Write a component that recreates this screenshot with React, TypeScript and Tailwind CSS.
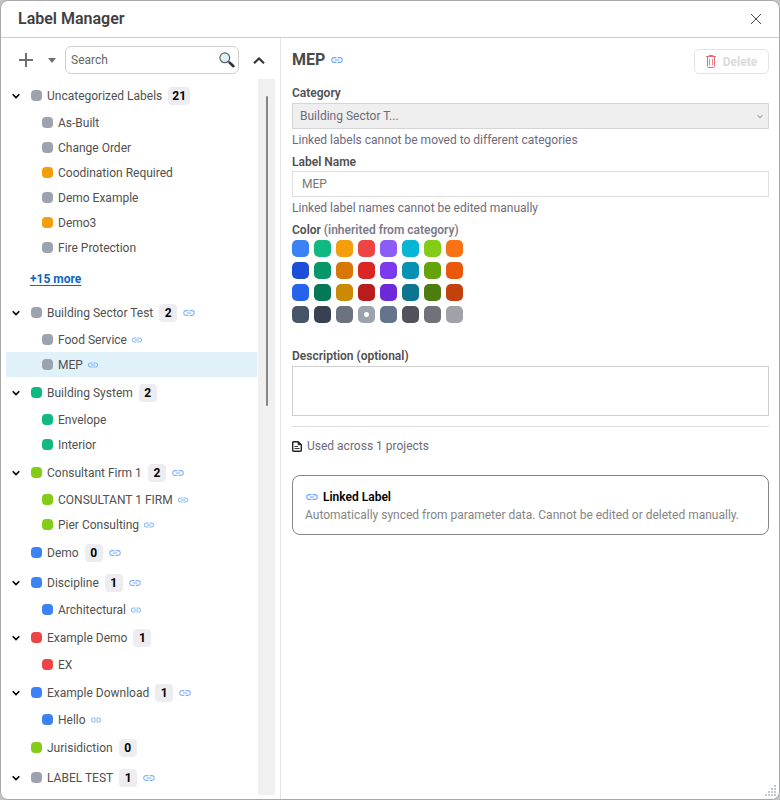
import React from 'react';
import { MdLink } from 'react-icons/md';

interface Label {
  name: string;
  color?: string;
  linked?: boolean;
  selected?: boolean;
}

interface Category {
  name: string;
  color: string;
  count: number;
  linked?: boolean;
  more?: number;
  labels: Label[];
}

const GRAY = 'bg-[#9ca3af]';
const AMBER = 'bg-[#f59e0b]';
const GREEN = 'bg-[#10b981]';
const LIME = 'bg-[#84cc16]';
const BLUE = 'bg-[#3b82f6]';
const RED = 'bg-[#ef4444]';

const categories: Category[] = [
  {
    name: 'Uncategorized Labels',
    color: GRAY,
    count: 21,
    more: 15,
    labels: [
      { name: 'As-Built' },
      { name: 'Change Order' },
      { name: 'Coodination Required', color: AMBER },
      { name: 'Demo Example' },
      { name: 'Demo3', color: AMBER },
      { name: 'Fire Protection' },
    ],
  },
  {
    name: 'Building Sector Test',
    color: GRAY,
    count: 2,
    linked: true,
    labels: [
      { name: 'Food Service', linked: true },
      { name: 'MEP', linked: true, selected: true },
    ],
  },
  {
    name: 'Building System',
    color: GREEN,
    count: 2,
    labels: [{ name: 'Envelope' }, { name: 'Interior' }],
  },
  {
    name: 'Consultant Firm 1',
    color: LIME,
    count: 2,
    linked: true,
    labels: [
      { name: 'CONSULTANT 1 FIRM', linked: true },
      { name: 'Pier Consulting', linked: true },
    ],
  },
  { name: 'Demo', color: BLUE, count: 0, linked: true, labels: [] },
  {
    name: 'Discipline',
    color: BLUE,
    count: 1,
    linked: true,
    labels: [{ name: 'Architectural', linked: true }],
  },
  { name: 'Example Demo', color: RED, count: 1, labels: [{ name: 'EX' }] },
  {
    name: 'Example Download',
    color: BLUE,
    count: 1,
    linked: true,
    labels: [{ name: 'Hello', linked: true }],
  },
  { name: 'Jurisidiction', color: LIME, count: 0, labels: [] },
];

const lastCategory: Category = {
  name: 'LABEL TEST',
  color: GRAY,
  count: 1,
  linked: true,
  labels: [],
};

const swatches = [
  'bg-[#3b82f6]', 'bg-[#10b981]', 'bg-[#f59e0b]', 'bg-[#ef4444]',
  'bg-[#8b5cf6]', 'bg-[#06b6d4]', 'bg-[#84cc16]', 'bg-[#f97316]',
  'bg-[#1d4ed8]', 'bg-[#059669]', 'bg-[#d97706]', 'bg-[#dc2626]',
  'bg-[#7c3aed]', 'bg-[#0891b2]', 'bg-[#65a30d]', 'bg-[#ea580c]',
  'bg-[#2563eb]', 'bg-[#047857]', 'bg-[#ca8a04]', 'bg-[#b91c1c]',
  'bg-[#6d28d9]', 'bg-[#0e7490]', 'bg-[#4d7c0f]', 'bg-[#c2410c]',
  'bg-[#475569]', 'bg-[#374151]', 'bg-[#6b7280]', 'bg-[#9ca3af]',
  'bg-[#64748b]', 'bg-[#52525b]', 'bg-[#71717a]', 'bg-[#a1a1aa]',
];
const SELECTED_SWATCH = 27;

function Chevron({ className }: { className: string }) {
  return (
    <svg className={className} viewBox="0 0 8 6" fill="none" stroke="currentColor">
      <path d="M0.7 1.2 L4 4.5 L7.3 1.2" strokeWidth="1.6" />
    </svg>
  );
}

function CategoryRow({ category, expandable }: { category: Category; expandable: boolean }) {
  return (
    <div className="flex h-[30px] items-center pt-px pl-[11px]">
      <div className="flex w-[19px] shrink-0">
        {expandable && (
          <button type="button" aria-label={`Collapse ${category.name}`} className="text-black">
            <Chevron className="h-[6px] w-2" />
          </button>
        )}
      </div>
      <span className={`size-[11px] shrink-0 rounded-[4px] ${category.color}`} />
      <button type="button" className="ml-[5px] whitespace-nowrap">{category.name}</button>
      <span className="ml-[6px] flex h-[18px] min-w-[18px] items-center justify-center rounded-[4px] bg-[#ededf1] px-1 font-bold text-black">
        {category.count}
      </span>
      {category.linked && <MdLink className="ml-[5px] size-[14px] shrink-0 text-[#7fb2fa]" />}
    </div>
  );
}

function CategoryGroup({ category, expandable }: { category: Category; expandable: boolean }) {
  return (
    <li>
      <CategoryRow category={category} expandable={expandable} />
      <ul>
        {category.labels.map((label) => (
          <li
            key={label.name}
            className={`ml-[5px] flex h-[25px] items-center pl-9 ${label.selected ? 'bg-[#e0f1fa]' : ''}`}
          >
            <span className={`size-[11px] shrink-0 rounded-[4px] ${label.color ?? category.color}`} />
            <button type="button" className="ml-[5px] whitespace-nowrap">{label.name}</button>
            {label.linked && <MdLink className="ml-1 size-3 shrink-0 text-[#7fb2fa]" />}
          </li>
        ))}
      </ul>
      {category.more && (
        <div className="flex h-[37px] items-center pl-[29px]">
          <a href="#more" className="font-bold text-[#0a66c8] underline underline-offset-2">
            +{category.more} more
          </a>
        </div>
      )}
    </li>
  );
}

function Sidebar() {
  return (
    <aside className="flex w-[280px] shrink-0 flex-col border-r border-[#e3e3e6]">
      <div className="flex h-[41px] items-center pt-[3px] pl-[18px]">
        <button type="button" aria-label="Add label" className="text-[#707070]">
          <svg className="size-[14px]" viewBox="0 0 14 14" stroke="currentColor" strokeWidth="2">
            <path d="M7 0 V14 M0 7 H14" />
          </svg>
        </button>
        <button type="button" aria-label="Add options" className="ml-[15px] text-[#707070]">
          <svg className="h-[5px] w-2" viewBox="0 0 8 5" fill="currentColor">
            <path d="M0 0 H8 L4 5 Z" />
          </svg>
        </button>
        <div className="ml-[9px] flex h-7 w-[174px] items-center rounded-[6px] border border-[#cfcfcf] pr-[3px] pl-[5px]">
          <input
            type="text"
            aria-label="Search labels"
            placeholder="Search"
            className="min-w-0 flex-1 outline-none placeholder:text-[#666]"
          />
          <svg className="size-4" viewBox="0 0 16 16" fill="none">
            <path d="M9.3 9.3 L11 11" stroke="#555" strokeWidth="1.5" />
            <path d="M10.8 10.8 L14.4 14.2" stroke="#333" strokeWidth="2.6" strokeLinecap="round" />
            <circle cx="5.8" cy="5.8" r="4.9" fill="#dcf1f5" stroke="#5c6468" strokeWidth="1.2" />
            <path d="M3 5.5 A3 3 0 0 1 5.5 3" stroke="#fff" strokeWidth="1" />
          </svg>
        </div>
        <button type="button" aria-label="Collapse all" className="ml-[14px] text-[#333]">
          <svg className="h-[7px] w-3" viewBox="0 0 12 7" fill="none" stroke="currentColor" strokeWidth="2.2">
            <path d="M1 6.2 L6 1.5 L11 6.2" />
          </svg>
        </button>
      </div>
      <div className="flex flex-1 pb-1">
        <ul className="min-w-0 flex-1 pt-px">
          {categories.map((category) => (
            <CategoryGroup
              key={category.name}
              category={category}
              expandable={category.labels.length > 0}
            />
          ))}
          <CategoryGroup category={lastCategory} expandable />
        </ul>
        {/* Scroll track */}
        <div className="mr-[5px] ml-px flex w-[17px] justify-center bg-[#f0f0f0] pt-[17px]">
          <div className="h-[310px] w-[2px] rounded-full bg-[#858585]" />
        </div>
      </div>
    </aside>
  );
}

function LabelDetails() {
  return (
    <main className="min-w-0 flex-1 pt-[11px] pr-[10px] pl-[11px]">
      <div className="flex h-[25px] items-start justify-between">
        <h2 className="flex items-center text-base leading-[22px] font-bold text-[#4a4a4a]">
          MEP
          <MdLink className="ml-[5px] size-[14px] text-[#69a5fb]" />
        </h2>
        <button
          type="button"
          disabled
          className="flex h-[25px] w-[75px] items-center justify-center gap-[7px] rounded-[5px] border border-[#e4e4e4] font-bold text-[#dadada]"
        >
          <svg className="h-[13px] w-[10px]" viewBox="0 0 10 13" fill="none" stroke="#ea6b78">
            <path d="M0 1.5 H10 M3 1.5 V0.5 H7 V1.5 M1.5 2 V11.5 Q1.5 12.5 2.5 12.5 H7.5 Q8.5 12.5 8.5 11.5 V2" />
            <path d="M3.5 4 V10.5 M6.5 4 V10.5" strokeWidth="0.8" />
          </svg>
          Delete
        </button>
      </div>

      {/* Category */}
      <label htmlFor="category" className="mt-[10px] block font-semibold">Category</label>
      <div className="mt-px grid items-center">
        <select
          id="category"
          disabled
          className="col-start-1 row-start-1 h-[26px] w-full appearance-none border border-[#d5d5d5] bg-[#efefef] px-[7px] text-[#6e6a7c] opacity-100"
        >
          <option>Building Sector T...</option>
        </select>
        <Chevron className="col-start-1 row-start-1 mr-[6px] h-[5px] w-[6px] justify-self-end text-[#a8a8a8]" />
      </div>
      <p className="mt-[2px] text-[#6e6a7c]">Linked labels cannot be moved to different categories</p>

      {/* Name */}
      <label htmlFor="label-name" className="mt-1 block font-semibold">Label Name</label>
      <input
        id="label-name"
        type="text"
        readOnly
        value="MEP"
        className="block h-[26px] w-full border border-[#e0e0e0] px-[9px] text-[#777] outline-none"
      />
      <p className="mt-[2px] text-[#6e6a7c]">Linked label names cannot be edited manually</p>

      {/* Color */}
      <fieldset className="mt-1">
        <legend className="font-semibold">
          Color <span className="text-[#7d7a8a]">(inherited from category)</span>
        </legend>
        <div className="mt-px grid w-fit grid-cols-8 gap-[5px]">
          {swatches.map((color, i) => (
            <input
              key={color}
              type="radio"
              name="color"
              aria-label={`Color ${i + 1}`}
              disabled
              defaultChecked={i === SELECTED_SWATCH}
              className={`size-[17px] appearance-none rounded-[5px] checked:bg-[radial-gradient(circle,white_2px,transparent_3px)] ${color}`}
            />
          ))}
        </div>
      </fieldset>

      {/* Description */}
      <label htmlFor="description" className="mt-6 block font-semibold">Description (optional)</label>
      <textarea
        id="description"
        className="mt-px block h-[50px] w-full resize-none border border-[#cfcfcf] p-2 outline-none"
      />

      <div className="mt-[10px] flex items-center gap-[5px] border-t border-[#dedede] pt-[10px] text-[#6e6a7c]">
        <svg className="h-[11px] w-[10px]" viewBox="0 0 10 11" fill="none" stroke="#222">
          <path d="M1.7 0.7 H6 L9.3 3.8 V9.3 Q9.3 10.3 8.3 10.3 H1.7 Q0.7 10.3 0.7 9.3 V1.7 Q0.7 0.7 1.7 0.7 Z" strokeWidth="1.4" />
          <path d="M6 0.7 V3.8 H9.3 Z" fill="#222" strokeWidth="0.6" />
          <path d="M2.5 5.5 H6 M2.5 7.5 H7.5" strokeWidth="0.9" />
        </svg>
        Used across 1 projects
      </div>

      <section className="mt-5 rounded-[8px] border border-[#858585] px-3 pt-3 pb-[10px]">
        <h3 className="flex items-center gap-1 font-semibold text-black">
          <MdLink className="size-[14px] text-[#69a5fb]" />
          Linked Label
        </h3>
        <p className="text-[#858585]">
          Automatically synced from parameter data. Cannot be edited or deleted manually.
        </p>
      </section>
    </main>
  );
}

export default function App() {
  return (
    <div className="flex min-h-screen bg-[#c4c4c4] font-['Roboto','Noto_Sans',sans-serif] text-[12px] leading-[18px] text-[#505050]">
      <div role="dialog" aria-labelledby="title" className="relative flex flex-1 flex-col rounded-[8px] border border-[#a8a8a8] bg-white">
        <header className="flex h-[37px] items-center justify-between border-b border-[#cdcdcd] pr-[18px] pl-[17px]">
          <h1 id="title" className="text-base font-semibold text-[#3f3f3f]">Label Manager</h1>
          <button type="button" aria-label="Close" className="text-[#444]">
            <svg className="size-[10px]" viewBox="0 0 10 10" stroke="currentColor">
              <path d="M0 0 L10 10 M10 0 L0 10" />
            </svg>
          </button>
        </header>
        <div className="flex flex-1">
          <Sidebar />
          <LabelDetails />
        </div>
        {/* Resize grip */}
        <svg className="absolute right-[3px] bottom-[3px] size-[11px]" viewBox="0 0 11 11" fill="#c3c8d8">
          <path d="M9 0h2v2h-2z M6 3h2v2h-2z M9 3h2v2h-2z M3 6h2v2h-2z M6 6h2v2h-2z M9 6h2v2h-2z M0 9h2v2h-2z M3 9h2v2h-2z M6 9h2v2h-2z M9 9h2v2h-2z" />
        </svg>
      </div>
    </div>
  );
}
